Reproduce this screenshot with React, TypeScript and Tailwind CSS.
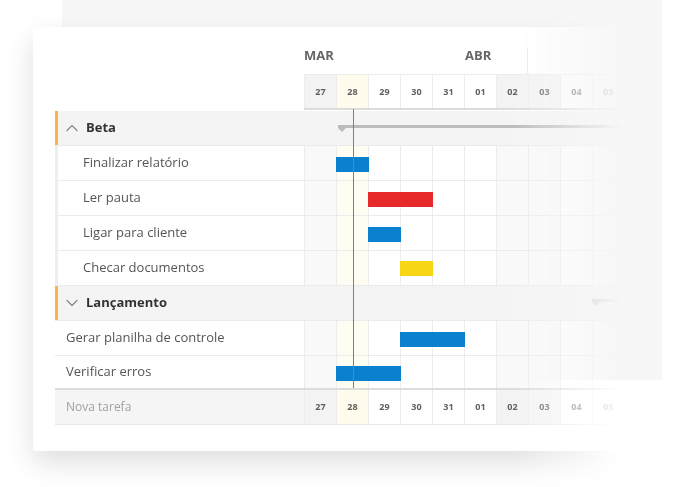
import { ChevronDown, ChevronUp } from "lucide-react";

const DAYS = ["27", "28", "29", "30", "31", "01", "02", "03", "04", "05"];
const COL = 32;

// column kind: weekend gets gray, today gets the pale yellow
const kind = (i: number) => (i === 1 ? "today" : i === 0 || i === 6 || i === 7 ? "weekend" : "plain");

type Task = { name: string; start: number; dur: number; color: string; top: number };

const BETA: Task[] = [
  { name: "Finalizar relatório", start: 1, dur: 1, color: "bg-[#0b80cf]", top: 11 },
  { name: "Ler pauta", start: 2, dur: 2, color: "bg-[#e8292b]", top: 11 },
  { name: "Ligar para cliente", start: 2, dur: 1, color: "bg-[#0b80cf]", top: 11 },
  { name: "Checar documentos", start: 3, dur: 1, color: "bg-[#f7d615]", top: 10 },
];

const LANCAMENTO: Task[] = [
  { name: "Gerar planilha de controle", start: 3, dur: 2, color: "bg-[#0b80cf]", top: 11 },
  { name: "Verificar erros", start: 1, dur: 2, color: "bg-[#0b80cf]", top: 10 },
];

function DayCells({ header }: { header?: boolean }) {
  return (
    <>
      {DAYS.map((d, i) => {
        const k = kind(i);
        const bg = header
          ? k === "today"
            ? "bg-[#fffcee]"
            : k === "weekend"
              ? "bg-[#f3f3f3]"
              : "bg-white"
          : k === "today"
            ? "bg-[#fffdf1]"
            : k === "weekend"
              ? "bg-[#f9f9f9]"
              : "bg-white";
        return (
          <div
            key={d}
            className={`flex h-full w-[32px] shrink-0 items-center justify-center border-l border-[#ececec] text-[9px] font-bold text-[#606060] ${bg}`}
          >
            {header ? d : null}
          </div>
        );
      })}
    </>
  );
}

function Bar({ t }: { t: Task }) {
  return (
    <div
      className={`absolute h-[15px] ${t.color}`}
      style={{ left: t.start * COL, width: t.dur * COL + 1, top: t.top }}
    />
  );
}

function GroupRow({ label, open, summary }: { label: string; open: boolean; summary: { left: number; top: number } }) {
  return (
    <div className="flex h-[35px] border-b border-[#ebebeb] bg-[#f4f4f4]">
      <div className="flex w-[249px] shrink-0 items-center gap-[4px] border-l-[3px] border-[#f9b54a] pl-[4px]">
        {open ? (
          <ChevronUp className="h-[20px] w-[20px] text-[#8a8a8a]" strokeWidth={1.5} />
        ) : (
          <ChevronDown className="h-[20px] w-[20px] text-[#8a8a8a]" strokeWidth={1.5} />
        )}
        <span className="text-[13px] font-bold text-[#333]">{label}</span>
      </div>
      <div className="relative flex-1">
        <div className="absolute right-0 h-[3px] bg-[#bcbcbc]" style={{ left: summary.left, top: summary.top }} />
        <div
          className="absolute h-0 w-0 border-x-[4px] border-t-[4px] border-x-transparent border-t-[#bcbcbc]"
          style={{ left: summary.left, top: summary.top + 3 }}
        />
      </div>
    </div>
  );
}

function TaskRow({ t, nested, last }: { t: Task; nested?: boolean; last?: boolean }) {
  return (
    <div className={`flex ${last ? "h-[34px] border-b-2 border-[#dcdcdc]" : "h-[35px] border-b border-[#ebebeb]"}`}>
      <div
        className={`flex w-[249px] shrink-0 items-center text-[13px] text-[#555] ${
          nested ? "border-l-[3px] border-[#eeeeee] pl-[25px]" : "pl-[11px]"
        }`}
      >
        {t.name}
      </div>
      <div className="relative flex h-full">
        <DayCells />
        <Bar t={t} />
      </div>
    </div>
  );
}

export default function App() {
  return (
    <div className="relative min-h-[487px] overflow-hidden bg-white font-['Open_Sans',sans-serif]">
      {/* backdrop panel behind the card */}
      <div className="absolute left-[62px] top-0 h-[380px] w-[600px] bg-[#f7f7f7]" />

      <div className="relative w-[622px] pb-[40px] pl-[33px] pt-[27px] [-webkit-mask-image:linear-gradient(to_right,#000_512px,transparent_622px)] [mask-image:linear-gradient(to_right,#000_512px,transparent_622px)]">
        <div className="overflow-hidden rounded-[3px] bg-white pb-[26px] pl-[22px] pt-[20px] shadow-[0_12px_28px_rgba(0,0,0,0.13)]">
          <div className="relative w-[569px]">
            {/* month row */}
            <div className="flex h-[27px]">
              <div className="w-[249px] shrink-0" />
              <div className="w-[160px] shrink-0 text-[13px] font-bold leading-[16px] text-[#666]">MAR</div>
              <div className="w-[64px] shrink-0 border-r border-[#ececec] pl-px text-[13px] font-bold leading-[16px] text-[#666]">
                ABR
              </div>
            </div>

            {/* day header */}
            <div className="flex h-[37px] pb-px">
              <div className="w-[249px] shrink-0" />
              <div className="flex h-full border-b-2 border-t border-[#dcdcdc] [border-top-color:#ececec]">
                <DayCells header />
              </div>
            </div>

            <GroupRow label="Beta" open summary={{ left: 34, top: 14 }} />
            {BETA.map((t) => (
              <TaskRow key={t.name} t={t} nested />
            ))}

            <GroupRow label="Lançamento" open={false} summary={{ left: 288, top: 13 }} />
            {LANCAMENTO.map((t, i) => (
              <TaskRow key={t.name} t={t} last={i === LANCAMENTO.length - 1} />
            ))}

            {/* footer */}
            <div className="flex h-[35px] border-b border-[#e8e8e8]">
              <div className="flex w-[249px] shrink-0 items-center bg-[#f5f5f5] pl-[11px] text-[12px] text-[#a0a0a0]">
                Nova tarefa
              </div>
              <div className="flex h-full">
                <DayCells header />
              </div>
            </div>

            {/* today marker */}
            <div className="absolute left-[298px] top-[62px] h-[279px] w-px bg-[#1d9fdf]" />
          </div>
        </div>
      </div>
    </div>
  );
}
